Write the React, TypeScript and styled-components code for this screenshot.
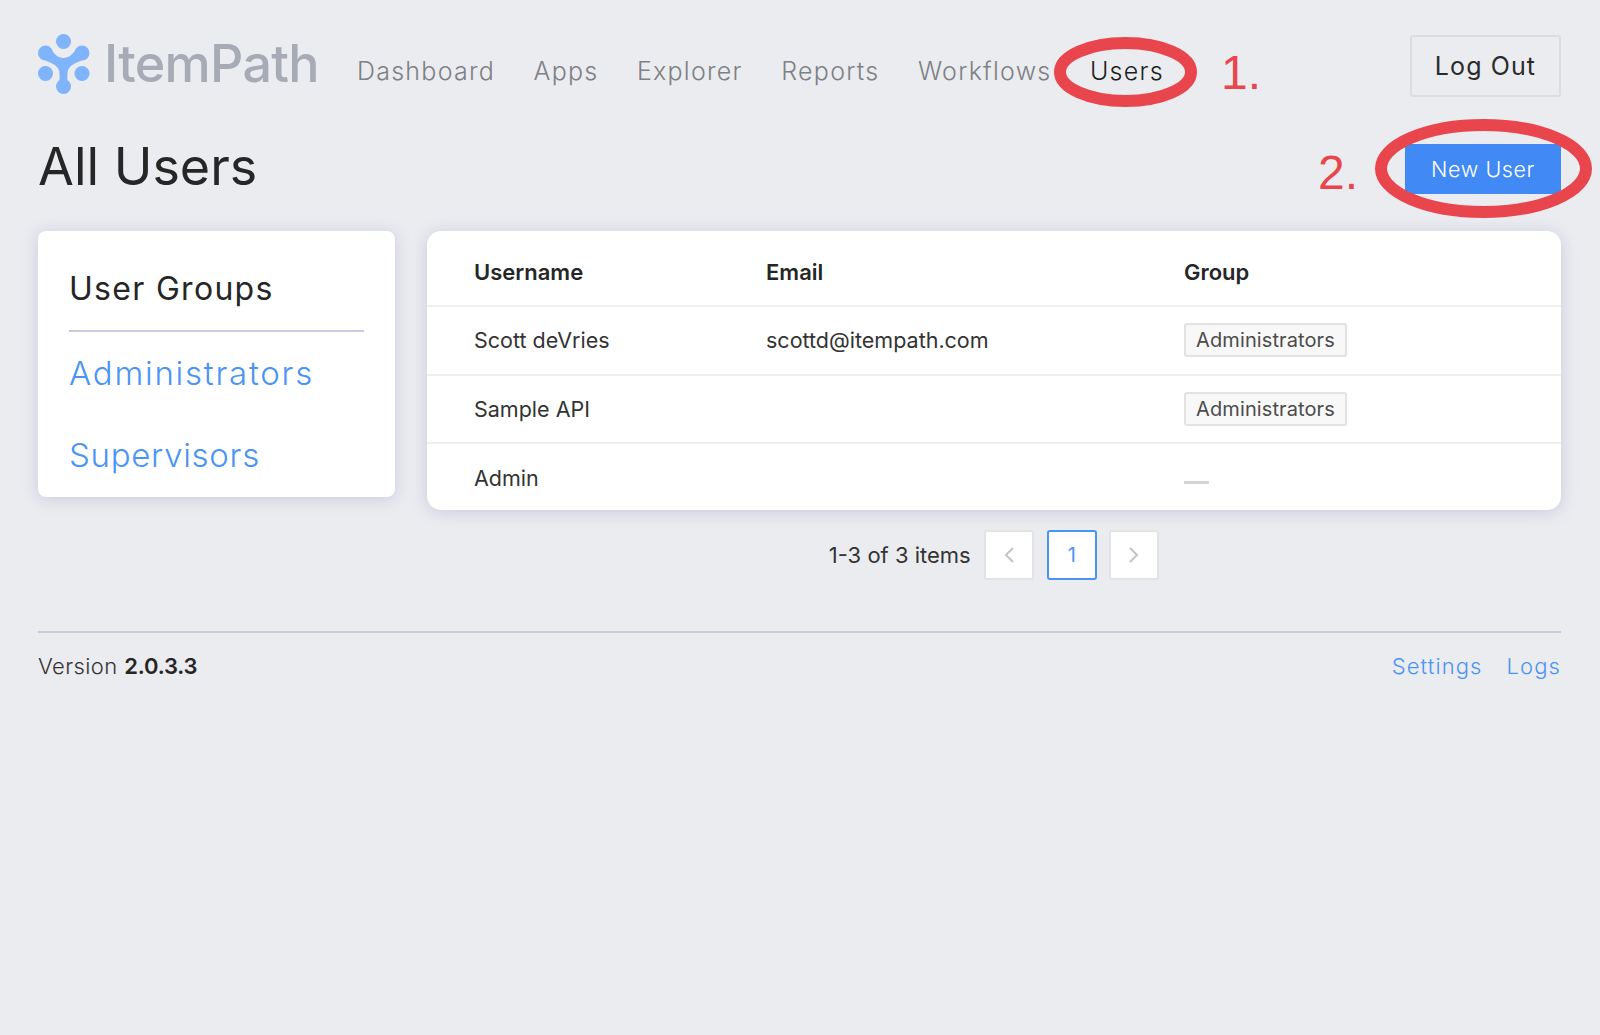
import React from "react";
import styled, { createGlobalStyle } from "styled-components";

const Global = createGlobalStyle`
  html, body { margin: 0; padding: 0; background: #ebecf0; }
  body { font-family: Inter, "Liberation Sans", sans-serif; color: #262626; }
  * { box-sizing: border-box; }
`;

const Page = styled.div`
  position: relative;
  width: 1600px;
  height: 1035px;
  overflow: hidden;
  padding: 34px 39px 0 38px;
  background: #ebecf0;
`;

const Header = styled.header`
  display: flex;
  align-items: flex-start;
  height: 110px;
`;

const Brand = styled.div`
  display: flex;
  align-items: center;
  gap: 14px;
  width: 319px;
  height: 60px;
  flex: none;
`;

const BrandName = styled.span`
  font-size: 52px;
  font-weight: 500;
  letter-spacing: -0.7px;
  line-height: 60px;
  color: #a6abb5;
`;

const Nav = styled.nav`
  display: flex;
  gap: 38.5px;
  padding-top: 21px;
`;

const NavLink = styled.a<{ $active?: boolean }>`
  font-size: 25px;
  line-height: 32px;
  letter-spacing: 1.25px;
  font-weight: 300;
  color: ${(p) => (p.$active ? "#1e1e1e" : "#7e8084")};
`;

const LogOut = styled.button`
  margin-left: auto;
  width: 151px;
  height: 62px;
  margin-top: 1px;
  background: transparent;
  border: 2px solid #dcdde1;
  border-radius: 3px;
  font: 400 25px Inter, sans-serif;
  letter-spacing: 1.1px;
  color: #2a2a2a;
`;

const TitleRow = styled.div`
  display: flex;
  align-items: center;
  justify-content: space-between;
  height: 50px;
`;

const Title = styled.h1`
  margin: -4px 0 0;
  font-size: 52px;
  font-weight: 400;
  line-height: 50px;
  color: #262626;
`;

const NewUser = styled.button`
  width: 156px;
  height: 50px;
  background: #4189f5;
  border: 0;
  border-radius: 2px;
  color: #fff;
  font: 300 21.5px Inter, sans-serif;
  letter-spacing: 0.6px;
`;

const Content = styled.div`
  display: grid;
  grid-template-columns: 357px 1134px;
  gap: 32px;
  align-items: start;
  margin-top: 37px;
`;

const Sidebar = styled.aside`
  height: 266px;
  padding: 0 31px;
  background: #fff;
  border-radius: 8px;
  box-shadow: 0 2px 16px rgba(110, 115, 170, 0.28);
`;

const SidebarTitle = styled.h2`
  margin: 0;
  height: 101px;
  padding-top: 40px;
  border-bottom: 2px solid #c8cbdd;
  font-size: 32px;
  font-weight: 400;
  line-height: 36px;
  letter-spacing: 1.3px;
  color: #262626;
`;

const GroupLink = styled.a<{ $track: number }>`
  display: block;
  margin-top: 21px;
  height: 60px;
  font-size: 33px;
  line-height: 40px;
  font-weight: 300;
  letter-spacing: ${(p) => p.$track}px;
  color: #4a94f5;
  & + & { margin-top: 22px; }
`;

const TableCard = styled.div`
  height: 279px;
  background: #fff;
  border-radius: 14px;
  box-shadow: 0 2px 16px rgba(110, 115, 170, 0.28);
  overflow: hidden;
`;

const Table = styled.table`
  width: 100%;
  border-collapse: collapse;
  table-layout: fixed;
`;

const HeadCell = styled.th<{ $w?: number }>`
  height: 75px;
  padding: 8px 0 0;
  width: ${(p) => (p.$w ? `${p.$w}px` : "auto")};
  text-align: left;
  font-size: 22px;
  font-weight: 600;
  color: #262626;
  &:first-child { padding-left: 47px; }
`;

const Row = styled.tr`
  border-top: 2px solid #eeeff3;
`;

const Cell = styled.td`
  height: 68.5px;
  padding: 0;
  font-size: 21.5px;
  color: #333;
  &:first-child { padding-left: 47px; }
`;

const Tag = styled.span`
  display: inline-flex;
  align-items: center;
  justify-content: center;
  width: 163px;
  height: 34px;
  background: #f8f8f8;
  border: 2px solid #e2e2e2;
  border-radius: 3px;
  font-size: 20px;
  letter-spacing: 0.1px;
  color: #4c4c4c;
  vertical-align: middle;
`;

const Dash = styled.span`
  display: block;
  width: 25px;
  height: 3px;
  margin-top: 10px;
  background: #d5d5d5;
`;

const Pagination = styled.div`
  display: flex;
  align-items: center;
  justify-content: center;
  margin-top: 20px;
  gap: 12.5px;
`;

const Count = styled.span`
  margin-right: 1px;
  font-size: 22px;
  color: #333;
`;

const PageButton = styled.div<{ $current?: boolean }>`
  display: flex;
  align-items: center;
  justify-content: center;
  width: 50px;
  height: 50px;
  background: #fff;
  border: 2px solid ${(p) => (p.$current ? "#4a94f5" : "#e3e3e3")};
  border-radius: 3px;
  font-size: 20px;
  color: #4a94f5;
`;

const Footer = styled.footer`
  display: flex;
  justify-content: space-between;
  margin-top: 51px;
  padding-top: 18px;
  border-top: 2px solid #c8cbdd;
  font-size: 22px;
  line-height: 30px;
`;

const Version = styled.div`
  color: #333;
  font-weight: 300;
  letter-spacing: 0.4px;
  strong { font-weight: 600; color: #262626; letter-spacing: -0.2px; }
`;

const FooterLinks = styled.div`
  display: flex;
  gap: 24px;
`;

const FooterLink = styled.a`
  color: #4a94f5;
  font-weight: 300;
  letter-spacing: 1.1px;
`;

const Markup = styled.svg`
  position: absolute;
  inset: 0;
  pointer-events: none;
`;

const Note = styled.span<{ $x: number; $y: number }>`
  position: absolute;
  left: ${(p) => p.$x}px;
  top: ${(p) => p.$y}px;
  font-family: "Liberation Sans", sans-serif;
  font-size: 48px;
  line-height: 48px;
  color: #e8454d;
`;

const Logo = () => (
  <svg width="52" height="60" viewBox="38 34 52 60" aria-hidden="true">
    <g fill="#7fb3fb">
      <circle cx="63.5" cy="41.5" r="7.5" />
      <circle cx="45.5" cy="73.5" r="7.5" />
      <circle cx="82" cy="73.5" r="7.5" />
      <circle cx="45.5" cy="53" r="7.5" />
      <circle cx="82" cy="53" r="7.5" />
      <circle cx="63.5" cy="86.5" r="7.5" />
      <path d="M50 48 C54 54 58 58 63.5 58 C69 58 73 54 77 48 L86 58 C80 62 72 63 68.5 69 C67 72 67.5 78 67.5 82 L59.5 82 C59.5 78 60 72 58.5 69 C55 63 47 62 41 58 Z" />
    </g>
  </svg>
);

const Chevron = ({ dir }: { dir: "left" | "right" }) => (
  <svg width="14" height="18" viewBox="0 0 14 18" fill="none" stroke="#c4c4c4" strokeWidth="2">
    <path d={dir === "left" ? "M11 2 L4 9 L11 16" : "M3 2 L10 9 L3 16"} />
  </svg>
);

export default function App() {
  return (
    <Page>
      <Global />
      <Header>
        <Brand>
          <Logo />
          <BrandName>ItemPath</BrandName>
        </Brand>
        <Nav>
          <NavLink>Dashboard</NavLink>
          <NavLink>Apps</NavLink>
          <NavLink>Explorer</NavLink>
          <NavLink>Reports</NavLink>
          <NavLink>Workflows</NavLink>
          <NavLink $active>Users</NavLink>
        </Nav>
        <LogOut>Log Out</LogOut>
      </Header>
      <TitleRow>
        <Title>All Users</Title>
        <NewUser>New User</NewUser>
      </TitleRow>
      <Content>
        <Sidebar>
          <SidebarTitle>User Groups</SidebarTitle>
          <GroupLink $track={1.75}>Administrators</GroupLink>
          <GroupLink $track={0.7}>Supervisors</GroupLink>
        </Sidebar>
        <div>
          <TableCard>
            <Table>
              <thead>
                <tr>
                  <HeadCell $w={339}>Username</HeadCell>
                  <HeadCell $w={418}>Email</HeadCell>
                  <HeadCell>Group</HeadCell>
                </tr>
              </thead>
              <tbody>
                <Row>
                  <Cell>Scott deVries</Cell>
                  <Cell>scottd@itempath.com</Cell>
                  <Cell><Tag>Administrators</Tag></Cell>
                </Row>
                <Row>
                  <Cell>Sample API</Cell>
                  <Cell />
                  <Cell><Tag>Administrators</Tag></Cell>
                </Row>
                <Row>
                  <Cell>Admin</Cell>
                  <Cell />
                  <Cell><Dash /></Cell>
                </Row>
              </tbody>
            </Table>
          </TableCard>
          <Pagination>
            <Count>1-3 of 3 items</Count>
            <PageButton><Chevron dir="left" /></PageButton>
            <PageButton $current>1</PageButton>
            <PageButton><Chevron dir="right" /></PageButton>
          </Pagination>
        </div>
      </Content>
      <Footer>
        <Version>Version <strong>2.0.3.3</strong></Version>
        <FooterLinks>
          <FooterLink>Settings</FooterLink>
          <FooterLink>Logs</FooterLink>
        </FooterLinks>
      </Footer>
      <Markup width="1600" height="1035" viewBox="0 0 1600 1035" fill="none" stroke="#e8454d" strokeWidth="12">
        <ellipse cx="1125.5" cy="72" rx="65.5" ry="29" />
        <ellipse cx="1483.5" cy="168.5" rx="102.5" ry="43.5" />
      </Markup>
      <Note $x={1221} $y={49}>1.</Note>
      <Note $x={1318} $y={149}>2.</Note>
    </Page>
  );
}
